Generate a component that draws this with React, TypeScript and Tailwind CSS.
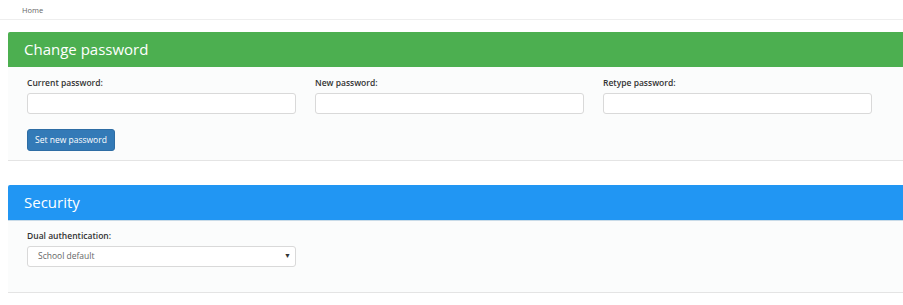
export default function App() {
  return (
    <div className="min-h-screen w-[903px] overflow-hidden bg-white font-['Open_Sans',sans-serif]">
      <div className="h-[20px] border-b border-[#eeeeee] pl-[22px] pt-[5px] text-[7.5px] leading-[10px] text-[#666]">
        Home
      </div>

      <div className="mt-[12px] ml-[8px] w-[910px]">
        <div className="rounded-t-[2px] border-b border-[#e4e4e4] bg-[#fbfcfc]">
          <div className="flex h-[35px] items-center rounded-t-[2px] bg-[#4caf50] pl-[16px] text-[15px] text-white">
            Change password
          </div>
          <div className="px-[19px] pt-[10px] pb-[9px]">
            <div className="flex gap-[19px]">
              {["Current password:", "New password:", "Retype password:"].map((l) => (
                <div key={l} className="flex w-[269px] flex-col">
                  <label className="mb-[4px] h-[12px] text-[8.5px] leading-[12px] font-semibold text-[#333]">
                    {l}
                  </label>
                  <input
                    type="password"
                    className="h-[21px] rounded-[3px] border border-[#d9d9d9] bg-white outline-none"
                  />
                </div>
              ))}
            </div>
            <button className="mt-[15px] h-[22px] rounded-[3px] border border-[#2e6da4] bg-[#337ab7] px-[7px] text-[8.5px] text-white">
              Set new password
            </button>
          </div>
        </div>

        <div className="mt-[24px] rounded-t-[2px] border-b border-[#e4e4e4] bg-[#fbfcfc]">
          <div className="flex h-[36px] items-center rounded-t-[2px] border-b border-[#c9dbe8] bg-[#2196f3] pl-[16px] text-[15px] text-white">
            Security
          </div>
          <div className="px-[19px] pt-[9px] pb-[25px]">
            <label className="mb-[4px] block h-[12px] text-[8.5px] leading-[12px] font-semibold text-[#333]">
              Dual authentication:
            </label>
            <div className="relative flex h-[21px] w-[269px] items-center rounded-[3px] border border-[#d9d9d9] bg-white pl-[10px] text-[8.5px] text-[#666]">
              School default
              <span className="absolute right-[4px] top-[5px] text-[7px] leading-[8px] text-[#333]">▼</span>
            </div>
          </div>
        </div>
      </div>
    </div>
  );
}
